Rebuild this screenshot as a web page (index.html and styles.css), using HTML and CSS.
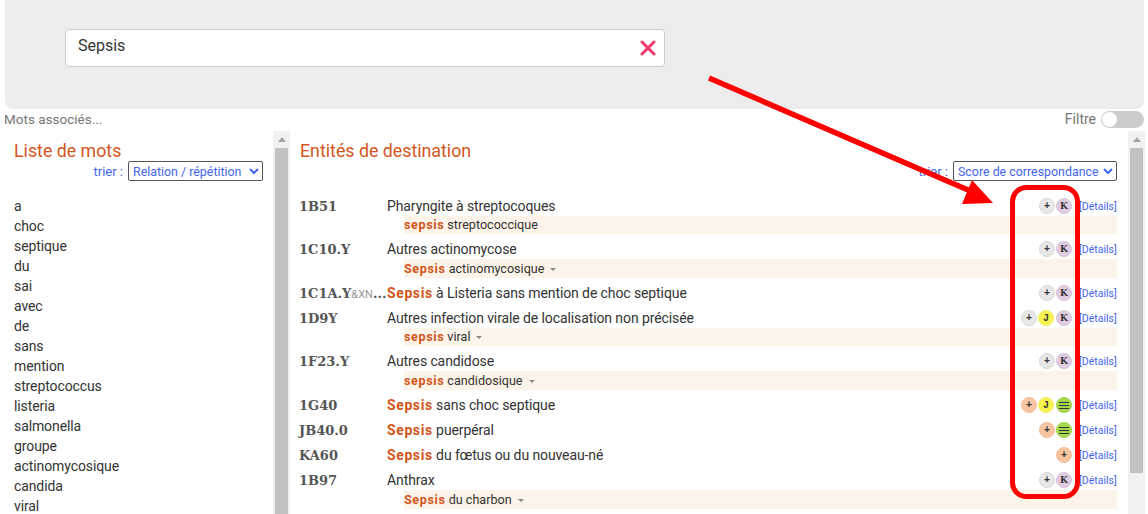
FILE: index.html
```html
<!DOCTYPE html>
<html lang="fr">

<head>
    <meta charset="UTF-8">
    <meta name="viewport" content="width=device-width, initial-scale=1.0">
    <title>Recherche - Sepsis</title>
    <link rel="stylesheet" href="styles.css">
</head>

<body>
    <div id="page">
        <div class="search-panel">
            <div class="search-box">
                <span class="search-text">Sepsis</span>
                <svg class="clear-icon" width="16" height="16" viewBox="0 0 16 16">
                    <path d="M2 2L14 14M14 2L2 14" stroke="#f23a6a" stroke-width="3" stroke-linecap="round" />
                </svg>
            </div>
        </div>

        <div class="options-bar">
            <span>Mots associés...</span>
            <div class="filter">
                <span>Filtre</span>
                <div class="toggle">
                    <div class="toggle-knob"></div>
                </div>
            </div>
        </div>

        <div class="columns">
            <div class="pane pane-words">
                <div class="pane-content">
                    <h2>Liste de mots</h2>
                    <div class="sort-row">
                        <label>trier :</label>
                        <select class="sort-words">
                            <option>Relation / répétition</option>
                        </select>
                    </div>
                    <ul class="word-list">
                        <li>a</li>
                        <li>choc</li>
                        <li>septique</li>
                        <li>du</li>
                        <li>sai</li>
                        <li>avec</li>
                        <li>de</li>
                        <li>sans</li>
                        <li>mention</li>
                        <li>streptococcus</li>
                        <li>listeria</li>
                        <li>salmonella</li>
                        <li>groupe</li>
                        <li>actinomycosique</li>
                        <li>candida</li>
                        <li>viral</li>
                    </ul>
                </div>
                <div class="scrollbar">
                    <div class="scroll-up"></div>
                    <div class="scroll-thumb thumb-words"></div>
                </div>
            </div>

            <div class="pane pane-results">
                <div class="pane-content">
                    <h2>Entités de destination</h2>
                    <div class="sort-row">
                        <label>trier :</label>
                        <select class="sort-results">
                            <option>Score de correspondance</option>
                        </select>
                    </div>

                    <div class="result">
                        <div class="result-main">
                            <span class="code">1B51</span>
                            <span class="title">Pharyngite à streptocoques</span>
                            <span class="badges"><i class="badge plus">+</i><i class="badge kind-k">K</i></span>
                            <a class="details">[Détails]</a>
                        </div>
                        <div class="result-sub"><b>sepsis</b> streptococcique</div>
                    </div>

                    <div class="result">
                        <div class="result-main">
                            <span class="code">1C10.Y</span>
                            <span class="title">Autres actinomycose</span>
                            <span class="badges"><i class="badge plus">+</i><i class="badge kind-k">K</i></span>
                            <a class="details">[Détails]</a>
                        </div>
                        <div class="result-sub with-caret"><b>Sepsis</b> actinomycosique<span class="caret"></span></div>
                    </div>

                    <div class="result">
                        <div class="result-main">
                            <span class="code">1C1A.Y<small>&amp;XN</small>...</span>
                            <span class="title"><b>Sepsis</b> à Listeria sans mention de choc septique</span>
                            <span class="badges"><i class="badge plus">+</i><i class="badge kind-k">K</i></span>
                            <a class="details">[Détails]</a>
                        </div>
                    </div>

                    <div class="result">
                        <div class="result-main">
                            <span class="code">1D9Y</span>
                            <span class="title">Autres infection virale de localisation non précisée</span>
                            <span class="badges"><i class="badge plus">+</i><i class="badge kind-j">J</i><i class="badge kind-k">K</i></span>
                            <a class="details">[Détails]</a>
                        </div>
                        <div class="result-sub"><b>sepsis</b> viral<span class="caret"></span></div>
                    </div>

                    <div class="result">
                        <div class="result-main">
                            <span class="code">1F23.Y</span>
                            <span class="title">Autres candidose</span>
                            <span class="badges"><i class="badge plus">+</i><i class="badge kind-k">K</i></span>
                            <a class="details">[Détails]</a>
                        </div>
                        <div class="result-sub with-caret"><b>sepsis</b> candidosique<span class="caret"></span></div>
                    </div>

                    <div class="result">
                        <div class="result-main">
                            <span class="code">1G40</span>
                            <span class="title"><b>Sepsis</b> sans choc septique</span>
                            <span class="badges"><i class="badge plus match">+</i><i class="badge kind-j">J</i><i class="badge kind-list"><svg width="10" height="9" viewBox="0 0 10 9"><path d="M0 1.5H10M0 4.5H10M0 7.5H10" stroke="#333" stroke-width="1" /></svg></i></span>
                            <a class="details">[Détails]</a>
                        </div>
                    </div>

                    <div class="result">
                        <div class="result-main">
                            <span class="code">JB40.0</span>
                            <span class="title"><b>Sepsis</b> puerpéral</span>
                            <span class="badges"><i class="badge plus match">+</i><i class="badge kind-list"><svg width="10" height="9" viewBox="0 0 10 9"><path d="M0 1.5H10M0 4.5H10M0 7.5H10" stroke="#333" stroke-width="1" /></svg></i></span>
                            <a class="details">[Détails]</a>
                        </div>
                    </div>

                    <div class="result">
                        <div class="result-main">
                            <span class="code">KA60</span>
                            <span class="title"><b>Sepsis</b> du fœtus ou du nouveau-né</span>
                            <span class="badges"><i class="badge plus match">+</i></span>
                            <a class="details">[Détails]</a>
                        </div>
                    </div>

                    <div class="result">
                        <div class="result-main">
                            <span class="code">1B97</span>
                            <span class="title">Anthrax</span>
                            <span class="badges"><i class="badge plus">+</i><i class="badge kind-k">K</i></span>
                            <a class="details">[Détails]</a>
                        </div>
                        <div class="result-sub with-caret"><b>Sepsis</b> du charbon<span class="caret"></span></div>
                    </div>
                </div>
                <div class="scrollbar">
                    <div class="scroll-up"></div>
                    <div class="scroll-thumb thumb-results"></div>
                </div>
            </div>
        </div>

        <!-- annotation drawn over the screenshot -->
        <svg class="annotation" width="1148" height="514" viewBox="0 0 1148 514">
            <path d="M709 78L975 193" stroke="#ff0000" stroke-width="5.5" fill="none" />
            <path d="M972 180L993 203L962 204Z" fill="#ff0000" />
            <rect x="1012.5" y="187.5" width="65" height="309" rx="14" stroke="#ff0000" stroke-width="5" fill="none" />
        </svg>
    </div>
</body>

</html>
```

FILE: styles.css
```css
body {
    margin: 0;
    padding: 0;
    background-color: #fff;
    font-family: Roboto, Arial, sans-serif;
    color: #333;
}

#page {
    position: relative;
    width: 1148px;
    height: 514px;
    overflow: hidden;
    display: flex;
    flex-direction: column;
}

.search-panel {
    height: 109px;
    margin: 0 4px 0 5px;
    padding: 29px 0 0 60px;
    box-sizing: border-box;
    background-color: #ededed;
    border-radius: 0 0 8px 8px;
}

.search-box {
    width: 600px;
    height: 38px;
    box-sizing: border-box;
    padding: 0 8px 5px 12px;
    display: flex;
    justify-content: space-between;
    align-items: center;
    background-color: #fff;
    border: 1px solid #ccc;
    border-radius: 4px;
    font-size: 16px;
}

.clear-icon {
    margin-top: 5px;
}

.options-bar {
    height: 20px;
    padding: 0 4px;
    margin-bottom: 2px;
    display: flex;
    justify-content: space-between;
    align-items: center;
    font-size: 13.5px;
    color: #777;
}

.filter {
    display: flex;
    align-items: center;
    gap: 5px;
    font-size: 14px;
}

.toggle {
    width: 43px;
    height: 17px;
    background-color: #ccc;
    border-radius: 9px;
}

.toggle-knob {
    width: 15px;
    height: 15px;
    margin: 1px;
    background-color: #fff;
    border-radius: 50%;
}

.columns {
    flex: 1;
    display: flex;
    min-height: 0;
}

.pane {
    display: flex;
    min-width: 0;
}

.pane-words {
    width: 290px;
}

.pane-results {
    width: 855px;
}

.pane-content {
    flex: 1;
    min-width: 0;
    overflow: hidden;
}

.pane-words .pane-content {
    padding: 0 10px 0 14px;
}

.pane-results .pane-content {
    padding: 0 11px 0 10px;
}

h2 {
    margin: 0;
    height: 30px;
    line-height: 40px;
    font-size: 17.8px;
    font-weight: 400;
    color: #d4561c;
}

.sort-row {
    height: 20px;
    display: flex;
    justify-content: flex-end;
    align-items: center;
    gap: 5px;
    font-size: 13px;
    color: #4466ee;
}

select {
    height: 20px;
    padding: 0;
    font-family: inherit;
    font-size: 12.4px;
    color: #4466ee;
    background-color: #fff;
    border: 1px solid #555;
    border-radius: 2px;
}

.sort-words {
    width: 135px;
}

.sort-results {
    width: 164px;
}

.word-list {
    margin: 15px 0 0 0;
    padding: 0;
    list-style: none;
    font-size: 14px;
    letter-spacing: -0.1px;
}

.word-list li {
    height: 20px;
    line-height: 20px;
}

.pane-results .sort-row {
    margin-bottom: 15px;
}

.result {
    padding-bottom: 5px;
}

.result-main {
    height: 20px;
    display: flex;
    align-items: center;
    font-size: 14px;
}

.code {
    width: 88px;
    margin-left: -1px;
    flex-shrink: 0;
    font-family: "DejaVu Serif", serif;
    font-weight: 700;
    font-size: 13px;
    color: #555;
    white-space: nowrap;
}

.code small {
    font-family: Roboto, sans-serif;
    font-weight: 400;
    font-size: 11px;
    color: #999;
}

.title {
    flex: 1;
    letter-spacing: -0.1px;
}

.title b,
.result-sub b {
    color: #d4561c;
    letter-spacing: 0.6px;
}

.badges {
    display: flex;
    gap: 1px;
    margin-right: 7px;
}

.badge {
    width: 16px;
    height: 16px;
    box-sizing: border-box;
    display: flex;
    justify-content: center;
    align-items: center;
    border-radius: 50%;
    font-family: "Liberation Mono", monospace;
    font-style: normal;
    font-weight: 700;
    font-size: 10px;
    color: #333;
}

.plus {
    background-color: #e8e8e8;
    border: 1px solid #d8d8d8;
}

.plus.match {
    background-color: #f8c5a2;
    border-color: #f5bc96;
}

.kind-k {
    font-family: "DejaVu Serif", serif;
    font-size: 9px;
    background-color: #e0cde2;
    border: 1px solid #d8c4da;
}

.kind-j {
    margin-right: 1px;
    background-color: #f7f24e;
    border: 1px solid #f2ee66;
}

.kind-list {
    background-color: #a6d94f;
    border: 1px solid #9dd045;
}

.details {
    width: 38px;
    font-size: 10.5px;
    color: #4466ee;
}

.result-sub {
    height: 18px;
    line-height: 18px;
    margin-left: 104px;
    padding-right: 0;
    background-color: #fdf4e9;
    font-size: 12.6px;
}

.result-sub.with-caret {
    height: 19px;
    line-height: 19px;
}

.caret {
    display: inline-block;
    margin-left: 6px;
    vertical-align: middle;
    border-left: 3px solid transparent;
    border-right: 3px solid transparent;
    border-top: 3px solid #888;
}

.scrollbar {
    width: 17px;
    flex-shrink: 0;
    box-sizing: border-box;
    padding: 0 2px;
    background-color: #f1f1f1;
}

.scroll-up {
    width: 0;
    height: 0;
    margin: 6px auto 6px;
    border-left: 4px solid transparent;
    border-right: 4px solid transparent;
    border-bottom: 5px solid #a3a3a3;
}

.scroll-thumb {
    background-color: #c1c1c1;
}

.thumb-words {
    height: 400px;
}

.thumb-results {
    height: 325px;
}

.annotation {
    position: absolute;
    top: 0;
    left: 0;
    pointer-events: none;
}
```
